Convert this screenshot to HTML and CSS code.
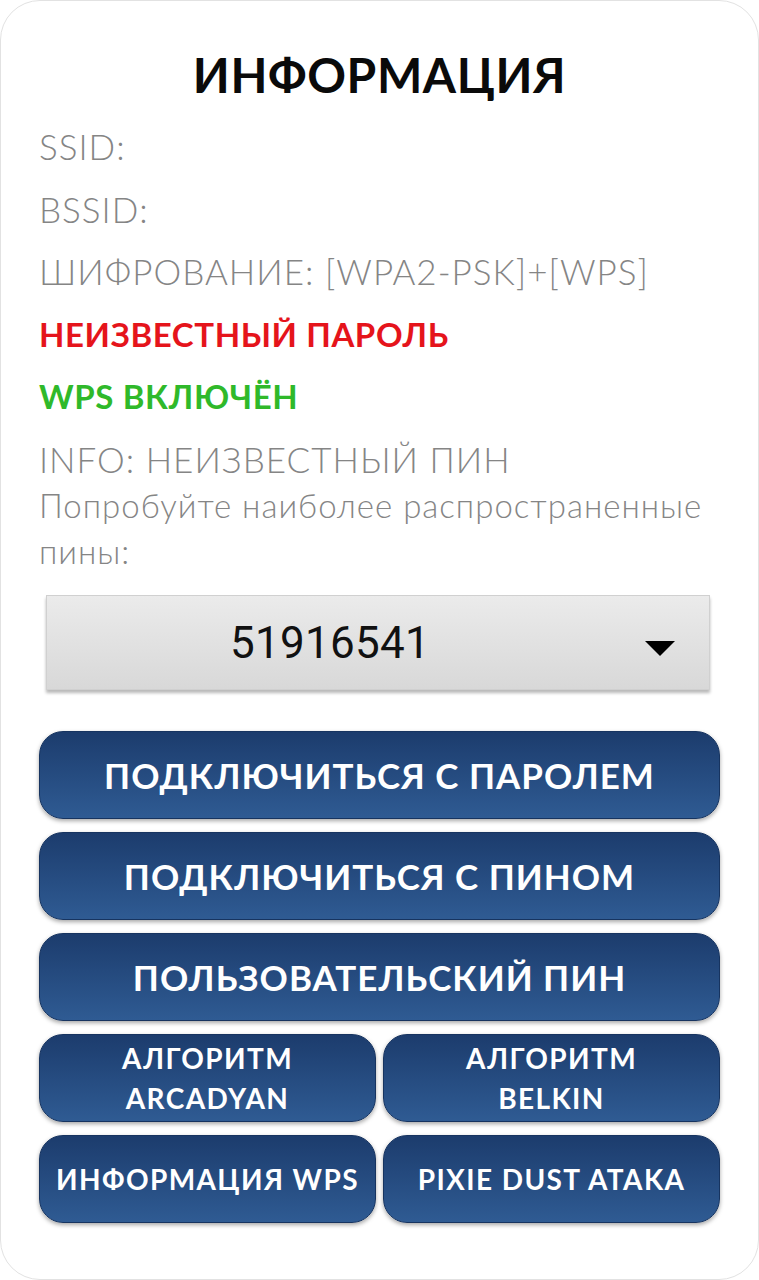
FILE: index.html
```html
<!DOCTYPE html>
<html lang="ru">
<head>
<meta charset="utf-8">
<link rel="stylesheet" href="styles.css">
</head>
<body>
<div class="card">
  <h1 class="title">ИНФОРМАЦИЯ</h1>
  <div class="info">
    <div class="line">SSID:</div>
    <div class="line">BSSID:</div>
    <div class="line">ШИФРОВАНИЕ: [WPA2-PSK]+[WPS]</div>
    <div class="line status red">НЕИЗВЕСТНЫЙ ПАРОЛЬ</div>
    <div class="line status green">WPS ВКЛЮЧЁН</div>
    <div class="line">INFO: НЕИЗВЕСТНЫЙ ПИН</div>
    <div class="hint">Попробуйте наиболее распространенные пины:</div>
  </div>
  <div class="select">
    <span class="select-value">51916541</span>
    <span class="select-arrow"></span>
  </div>
  <div class="buttons">
    <div class="btn wide">ПОДКЛЮЧИТЬСЯ С ПАРОЛЕМ</div>
    <div class="btn wide">ПОДКЛЮЧИТЬСЯ С ПИНОМ</div>
    <div class="btn wide">ПОЛЬЗОВАТЕЛЬСКИЙ ПИН</div>
    <div class="row">
      <div class="btn small">АЛГОРИТМ<br>ARCADYAN</div>
      <div class="btn small">АЛГОРИТМ<br>BELKIN</div>
    </div>
    <div class="row">
      <div class="btn small">ИНФОРМАЦИЯ WPS</div>
      <div class="btn small">PIXIE DUST ATAKA</div>
    </div>
  </div>
</div>
</body>
</html>
```
FILE: styles.css
```css
html, body {
  margin: 0;
  padding: 0;
  background: #ffffff;
}
.card {
  box-sizing: border-box;
  width: 759px;
  height: 1280px;
  border: 1px solid #e2e2e2;
  border-radius: 40px;
  background: #ffffff;
  padding: 42px 38px 0 38px;
  font-family: Lato, "Noto Sans", sans-serif;
}
.title {
  margin: 0;
  text-align: center;
  font-size: 48px;
  font-weight: 700;
  line-height: 64px;
  color: #0a0a0a;
  letter-spacing: 0.6px;
}
.info {
  margin-top: 8px;
}
.line {
  font-size: 35px;
  font-weight: 300;
  line-height: 62.5px;
  height: 62.5px;
  color: #858585;
  letter-spacing: 1px;
}
.status {
  font-weight: 700;
  font-size: 33px;
  letter-spacing: 0.6px;
}
.red { color: #e5141b; }
.green { color: #2fb92a; }
.hint {
  font-size: 33px;
  font-weight: 300;
  line-height: 46px;
  color: #858585;
  letter-spacing: 1px;
  margin-top: -8px;
  margin-right: -10px;
}
.select {
  margin: 21px 10px 0 7px;
  height: 95px;
  box-sizing: border-box;
  background: linear-gradient(#ebebeb, #d8d8d8);
  border: 1px solid #d0d0d0;
  box-shadow: 0 3px 3px rgba(0,0,0,0.28);
  display: flex;
  align-items: center;
  justify-content: center;
  position: relative;
}
.select-value {
  font-family: Roboto, sans-serif;
  font-size: 44px;
  color: #111;
  margin-left: -96px;
  letter-spacing: 0.3px;
}
.select-arrow {
  position: absolute;
  right: 34px;
  top: 45px;
  width: 0;
  height: 0;
  border-left: 15px solid transparent;
  border-right: 15px solid transparent;
  border-top: 15px solid #000;
}
.buttons {
  margin-top: 41px;
  display: flex;
  flex-direction: column;
  gap: 13px;
}
.row {
  display: flex;
  gap: 7px;
}
.btn {
  box-sizing: border-box;
  height: 88px;
  border-radius: 24px;
  background: linear-gradient(#1c3c6d, #2f5b93);
  border: 1px solid #173460;
  box-shadow: 0 2px 4px rgba(0,0,0,0.35);
  color: #ffffff;
  display: flex;
  align-items: center;
  justify-content: center;
  text-align: center;
  font-weight: 700;
}
.wide {
  font-size: 35px;
  letter-spacing: 1px;
}
.small {
  flex: 1;
  font-size: 28px;
  line-height: 40px;
  letter-spacing: 1.4px;
}
```
